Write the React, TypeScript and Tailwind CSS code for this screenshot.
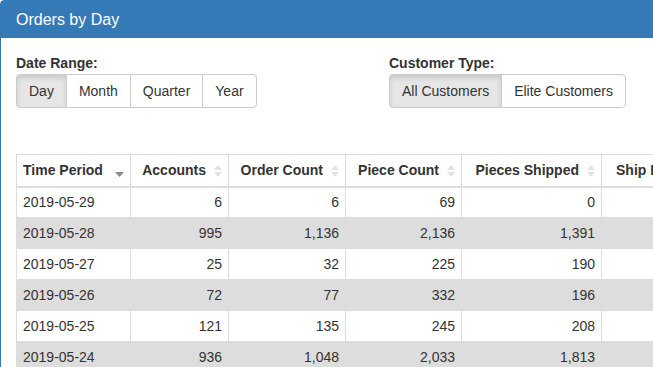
const rows = [
  ["2019-05-29", "6", "6", "69", "0"],
  ["2019-05-28", "995", "1,136", "2,136", "1,391"],
  ["2019-05-27", "25", "32", "225", "190"],
  ["2019-05-26", "72", "77", "332", "196"],
  ["2019-05-25", "121", "135", "245", "208"],
  ["2019-05-24", "936", "1,048", "2,033", "1,813"],
];

const columns = [
  { label: "Accounts", w: "w-[98px]" },
  { label: "Order Count", w: "w-[117px]" },
  { label: "Piece Count", w: "w-[116px]" },
  { label: "Pieces Shipped", w: "w-[140px]" },
];

function SortBoth() {
  return (
    <svg
      width="8"
      height="12"
      viewBox="0 0 8 12"
      className="absolute right-[6px] top-[10px]"
    >
      <path d="M4 0 L8 5 L0 5 Z" fill="#e2e2e2" />
      <path d="M0 7 L8 7 L4 12 Z" fill="#e2e2e2" />
    </svg>
  );
}

function SortDesc() {
  return (
    <svg
      width="9"
      height="5"
      viewBox="0 0 9 5"
      className="absolute right-[6px] top-[17px]"
    >
      <path d="M0 0 L9 0 L4.5 5 Z" fill="#8a8a8a" />
    </svg>
  );
}

function BtnGroup({ items, active }: { items: string[]; active: number }) {
  return (
    <div className="flex">
      {items.map((item, i) => (
        <button
          key={item}
          className={
            "h-[34px] px-3 text-[14px] text-[#333] border border-[#ccc] -ml-px first:ml-0 first:rounded-l-[4px] last:rounded-r-[4px] " +
            (i === active
              ? "bg-[#e6e6e6] border-[#adadad] shadow-[inset_0_3px_5px_rgba(0,0,0,0.125)] z-10"
              : "bg-white")
          }
        >
          {item}
        </button>
      ))}
    </div>
  );
}

export default function App() {
  return (
    <div
      className="w-[653px] h-[367px] overflow-hidden bg-white text-[#333]"
      style={{ fontFamily: '"Liberation Sans", Arial, sans-serif' }}
    >
      <div className="w-[680px] border border-[#337ab7] rounded-t-[4px]">
        <div className="bg-[#337ab7] h-[37px] px-[15px] flex items-center">
          <h3 className="text-[16px] text-white leading-none">Orders by Day</h3>
        </div>
        <div className="px-[15px] pt-[15px]">
          <div className="flex">
            <div className="w-[373px]">
              <label className="block font-bold text-[14px] leading-[20px] mb-[1px]">
                Date Range:
              </label>
              <BtnGroup items={["Day", "Month", "Quarter", "Year"]} active={0} />
            </div>
            <div>
              <label className="block font-bold text-[14px] leading-[20px] mb-[1px]">
                Customer Type:
              </label>
              <BtnGroup items={["All Customers", "Elite Customers"]} active={0} />
            </div>
          </div>

          <table className="mt-[46px] border-collapse text-[14px] w-[720px] table-fixed">
            <thead>
              <tr>
                <th className="relative w-[114px] h-[32px] border border-[#ddd] border-b-2 text-left pl-[6px] font-bold">
                  Time Period
                  <SortDesc />
                </th>
                {columns.map((c) => (
                  <th
                    key={c.label}
                    className={
                      "relative h-[32px] border border-[#ddd] border-b-2 text-right pr-[22px] font-bold " +
                      c.w
                    }
                  >
                    {c.label}
                    <SortBoth />
                  </th>
                ))}
                <th className="relative h-[32px] border border-[#ddd] border-b-2 text-left pl-[14px] font-bold">
                  Ship Date
                </th>
              </tr>
            </thead>
            <tbody>
              {rows.map((r, i) => (
                <tr key={r[0]} className={i % 2 === 1 ? "bg-[#ddd]" : "bg-white"}>
                  <td className="h-[31px] border border-[#ddd] pl-[6px]">{r[0]}</td>
                  {r.slice(1).map((v, j) => (
                    <td key={j} className="h-[31px] border border-[#ddd] text-right pr-[6px]">
                      {v}
                    </td>
                  ))}
                  <td className="h-[31px] border border-[#ddd]"></td>
                </tr>
              ))}
            </tbody>
          </table>
        </div>
      </div>
    </div>
  );
}
